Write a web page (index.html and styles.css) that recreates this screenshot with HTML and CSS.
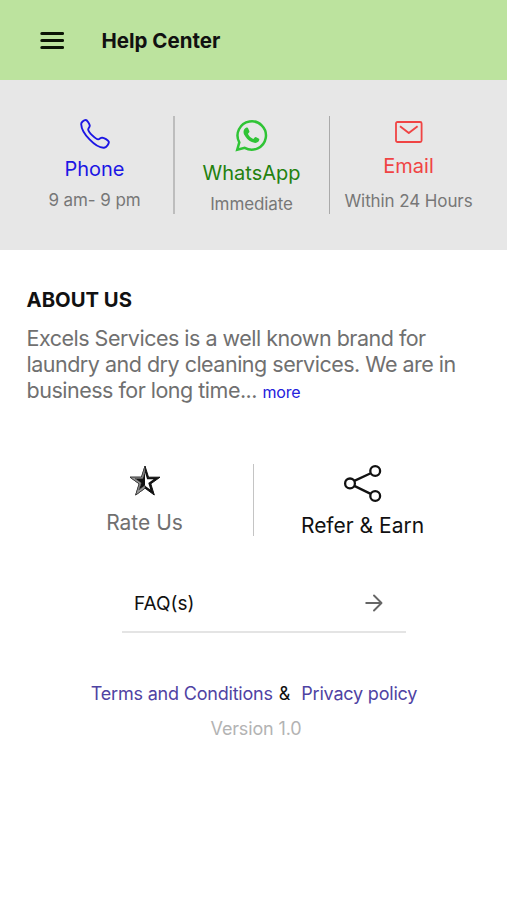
FILE: index.html
```html
<!DOCTYPE html>
<html lang="en">
<head>
    <meta charset="UTF-8">
    <meta name="viewport" content="width=device-width, initial-scale=1.0">
    <title>Help Center</title>
    <link rel="stylesheet" href="styles.css">
</head>
<body>
    <header class="header">
        <svg class="menu-icon" width="24" height="20" viewBox="0 0 24 20">
            <path d="M1.8 2.5h20.800M1.800 9.500h20.800M1.800 16.500h20.800" stroke="#0b1405" stroke-width="3" stroke-linecap="round"/>
        </svg>
        <h1>Help Center</h1>
    </header>

    <section class="contact">
        <div class="contact-item phone">
            <svg width="30" height="30" viewBox="0 0 30 30" fill="none" stroke="#1c16e4" stroke-width="1.9" stroke-linejoin="round">
                <path d="M1.2 5.2C1 3.500 3.700 1 5.800 1C7.100 1 9.200 4.700 9.700 6.300C10.100 8 8 9.300 8.200 10.600C8.600 13.300 15.300 20.200 18.300 20.400C19.600 20.400 20.500 18.500 22.200 18.600C24 18.800 28.300 21.200 28.800 22.800C29.200 24.700 26.500 28.300 24 28.700C15.500 29.200 1.500 14 1.200 5.200Z"/>
            </svg>
            <div class="contact-name">Phone</div>
            <div class="contact-note">9 am- 9 pm</div>
        </div>
        <div class="contact-item whatsapp">
            <svg width="33" height="33" viewBox="0 0 33 33">
                <path d="M2.200 30.800L4.300 23.300A14.200 14.200 0 1 1 9.700 28.800Z" fill="none" stroke="#2fc435" stroke-width="2.500"/>
                <path d="M11 8.800C12.200 8.400 12.900 8.700 13.200 9.500L14.400 12.300C14.700 13.300 13.300 14.200 13 14.900C14 17.200 15.900 18.900 18.300 19.900C19.200 19.700 19.800 17.900 20.800 18.100L24 19.700C24.600 20.200 24.200 21.800 23.500 22.600C21.800 24.300 19.300 24.200 16.800 23.100C13.300 21.600 10.800 18.800 9.100 15.600C7.900 13 8.600 10.100 11 8.800Z" fill="#2fc435"/>
            </svg>
            <div class="contact-name">WhatsApp</div>
            <div class="contact-note">Immediate</div>
        </div>
        <div class="contact-item email">
            <svg width="28" height="22" viewBox="0 0 28 22" fill="none" stroke="#f04444" stroke-width="1.800" stroke-linejoin="round">
                <rect x="1" y="1" width="25.600" height="20" rx="1.500"/>
                <path d="M5 5.200L13.800 12L22.600 5.200" stroke-width="1.900"/>
            </svg>
            <div class="contact-name">Email</div>
            <div class="contact-note">Within 24 Hours</div>
        </div>
    </section>

    <section class="about">
        <h2>ABOUT US</h2>
        <p>Excels Services is a well known brand for<br>
        laundry and dry cleaning services. We are in<br>
        business for long time... <a class="more">more</a></p>
    </section>

    <section class="actions">
        <div class="action rate">
            <svg width="32" height="31" viewBox="0 0 32 31">
                <path d="M16 1L19.500 12.200H31L21.800 18.800L25.300 30L16 23.200L6.700 30L10.200 18.800L1 12.200H12.500Z" fill="#fff" stroke="#111" stroke-width="1"/>
                <path d="M16 1L19.500 12.200H31L21.800 18.800L25.300 30L16 23.200V20.800L21.300 24.600L19.300 18L24.600 14.200H18.100L16 7.500Z" fill="#111"/>
                <path d="M16 7V20.500L9.800 25L12.200 17.900L6 13.600H13.700Z" fill="#111"/>
                <path d="M16 1L12.500 12.200H1L10.200 18.800L6.700 30L16 23.200V20.500L9.800 25L12.200 17.900L6 13.600H13.700L16 6Z" fill="#999" stroke="#333" stroke-width=".6"/>
            </svg>
            <div class="action-name">Rate Us</div>
        </div>
        <div class="action refer">
            <svg width="40" height="40" viewBox="0 0 40 40" fill="none" stroke="#111" stroke-width="2.300">
                <path d="M11.300 16.900L27.700 9.200M11.300 21.900L27.700 29.900"/>
                <circle cx="7" cy="19.400" r="4.900"/>
                <circle cx="32.200" cy="7" r="4.900"/>
                <circle cx="32.200" cy="32" r="4.900"/>
            </svg>
            <div class="action-name">Refer &amp; Earn</div>
        </div>
    </section>

    <div class="faq">
        <span>FAQ(s)</span>
        <svg width="18" height="18" viewBox="0 0 18 18" fill="none" stroke="#666" stroke-width="1.900" stroke-linecap="round" stroke-linejoin="round">
            <path d="M1.200 9H16M9 1.500L16.500 9L9 16.500"/>
        </svg>
    </div>

    <footer class="footer">
        <div class="links">
            <a class="terms">Terms and Conditions</a>
            <span class="amp">&amp;</span>
            <a class="privacy">Privacy policy</a>
        </div>
        <div class="version">Version 1.0</div>
    </footer>
</body>
</html>
```

FILE: styles.css
```css
* {
    box-sizing: border-box;
}
body {
    margin: 0;
    height: 900px;
    background-color: #ffffff;
    color: #111111;
    font-family: Inter, "Liberation Sans", sans-serif;
    white-space: nowrap;
    overflow: hidden;
}
svg {
    display: block;
    flex-shrink: 0;
}
.header {
    display: flex;
    align-items: center;
    height: 80px;
    padding: 1px 0 0 40px;
    background-color: #bce39e;
}
.menu-icon {
    margin-top: 1px;
}
.header h1 {
    margin: 0 0 0 37.5px;
    font-size: 20.5px;
    font-weight: 650;
    line-height: 24px;
}

/* contact strip */
.contact {
    display: grid;
    grid-template-columns: 159px 156px 157px;
    height: 170px;
    padding: 36px 19px 0 16px;
    background-color: #e7e7e7;
}
.contact-item {
    display: flex;
    flex-direction: column;
    align-items: center;
    height: 98px;
    border-right: 2px solid #bdbdbd;
}
.contact-item.whatsapp {
    padding-right: 1px;
    border-right-width: 1px;
    margin-right: 1px;
    border-right-color: #aaaaaa;
}
.contact-item.email {
    padding-right: 2px;
    border-right: none;
}
.contact-name {
    font-size: 20px;
    line-height: 24px;
}
.contact-note {
    color: #777777;
    font-size: 17px;
    line-height: 20px;
    letter-spacing: -0.1px;
}
.phone svg {
    margin: 3px 0 8px;
}
.phone .contact-name {
    color: #1c16e4;
}
.phone .contact-note {
    margin-top: 9px;
}
.whatsapp svg {
    margin: 3px 0 9px;
}
.whatsapp .contact-name {
    color: #23810f;
}
.whatsapp .contact-note {
    margin-top: 9px;
}
.email svg {
    margin: 5px 0 11px;
}
.email .contact-name {
    color: #f04444;
}
.email .contact-note {
    margin-top: 13px;
}

.about {
    padding: 37px 0 0 26.5px;
}
.about h2 {
    margin: 0;
    font-size: 20.3px;
    font-weight: 650;
    line-height: 26px;
}
.about p {
    margin: 12px 0 0;
    color: #707070;
    font-size: 21.5px;
    line-height: 26.2px;
    letter-spacing: -0.5px;
}
.more {
    color: #2420dc;
    font-size: 16px;
    letter-spacing: -0.2px;
}

.actions {
    display: flex;
    height: 72px;
    margin: 58px 36px 0 36px;
}
.action {
    display: flex;
    flex-direction: column;
    align-items: center;
    width: 217px;
}
.action-name {
    font-size: 21px;
    line-height: 26px;
}
.rate {
    width: 218px;
    border-right: 1px solid #c4c4c4;
}
.rate svg {
    margin: 1px 0 14px;
}
.rate .action-name {
    color: #707070;
}
.refer svg {
    margin-bottom: 9px;
}

.faq {
    display: flex;
    justify-content: space-between;
    align-items: center;
    width: 284px;
    height: 57px;
    margin: 40px 0 0 122px;
    padding: 0 23px 0 12px;
    border-bottom: 2px solid #e4e4e4;
    font-size: 19px;
}

.footer {
    padding-top: 49px;
}
.links {
    display: flex;
    justify-content: center;
    padding-left: 1px;
    font-size: 18px;
    line-height: 24px;
    letter-spacing: -0.2px;
}
.links a {
    color: #4f43a3;
}
.amp {
    margin: 0 11px 0 6px;
}
.version {
    margin: 11px 0 0 5px;
    color: #b3b3b3;
    font-size: 18px;
    line-height: 24px;
    letter-spacing: -0.15px;
    text-align: center;
}
```
